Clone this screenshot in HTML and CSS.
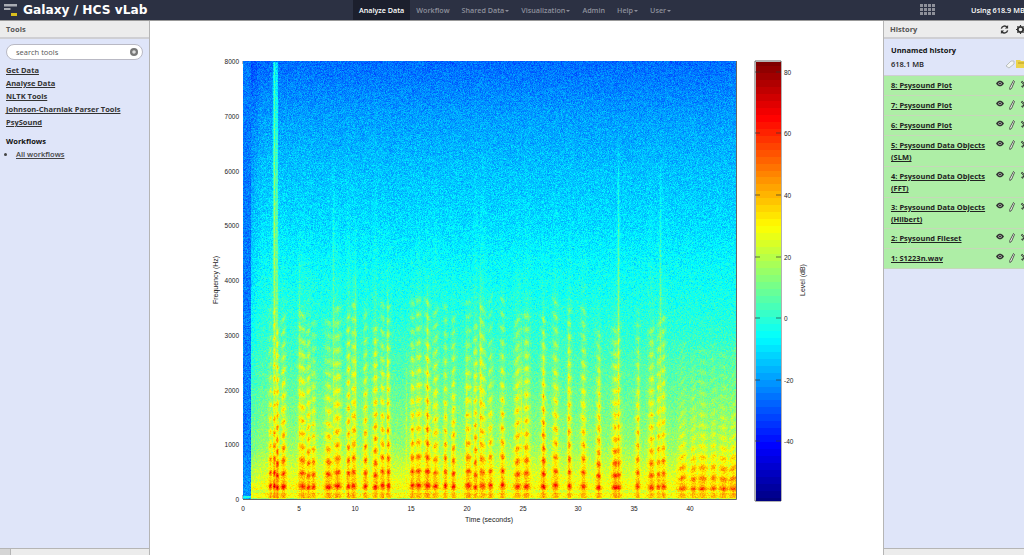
FILE: index.html
```html
<!DOCTYPE html>
<html lang="en">
<head>
    <meta charset="UTF-8">
    <meta name="viewport" content="width=device-width, initial-scale=1.0">
    <title>Galaxy / HCS vLab</title>
    <link rel="stylesheet" href="styles.css">
</head>
<body>

    <svg class="icon-defs" width="0" height="0">
        <symbol id="eye" viewBox="0 0 10 8">
            <path d="M0 4C2 1 3.500 .5 5 .5S8 1 10 4C8 7 6.500 7.500 5 7.500S2 7 0 4Z" fill="#333"/>
            <circle cx="5" cy="4" r="2" fill="#cfd8cf"/>
            <circle cx="5" cy="4" r="1.200" fill="#222"/>
        </symbol>
        <symbol id="pencil" viewBox="0 0 6 10">
            <path d="M4.500 .5L5.500 1.500L2.500 8.500L.8 9.500L.8 7.500Z" fill="#f4f8f0" stroke="#333" stroke-width=".8"/>
        </symbol>
        <symbol id="cross" viewBox="0 0 9 9">
            <path d="M1.500 1.500L7.500 7.500M7.500 1.500L1.500 7.500" stroke="#333" stroke-width="2" stroke-dasharray="1.200 .5"/>
        </symbol>
    </svg>

    <div id="masthead">
        <div class="brand">
            <svg class="brand-logo" width="13" height="12" viewBox="0 0 13 12">
                <rect x="0" y="0" width="13" height="2.500" fill="#a9acb3"/>
                <rect x="0" y="4" width="6.500" height="2" fill="#a9acb3"/>
                <rect x="7" y="9" width="6" height="3" fill="#d8bd1e"/>
            </svg>
            <span class="brand-title">Galaxy / HCS vLab</span>
        </div>
        <ul class="nav">
            <li class="nav-item active">Analyze Data</li>
            <li class="nav-item">Workflow</li>
            <li class="nav-item caret">Shared Data</li>
            <li class="nav-item caret">Visualization</li>
            <li class="nav-item">Admin</li>
            <li class="nav-item caret">Help</li>
            <li class="nav-item caret">User</li>
        </ul>
        <div class="apps-grid">
            <i></i><i></i><i></i><i></i><i></i><i></i><i></i><i></i><i></i><i></i><i></i><i></i>
        </div>
        <div class="quota">Using 618.9 MB</div>
    </div>

    <div id="columns">
        <div id="left" class="panel">
            <div class="panel-header">Tools</div>
            <div class="panel-body tools">
                <div class="search">
                    <span>search tools</span>
                    <svg class="search-clear" width="8" height="8" viewBox="0 0 8 8">
                        <circle cx="4" cy="4" r="4" fill="#777"/>
                        <circle cx="4" cy="4" r="1.800" fill="#ddd"/>
                    </svg>
                </div>
                <a class="tool-link">Get Data</a>
                <a class="tool-link">Analyse Data</a>
                <a class="tool-link">NLTK Tools</a>
                <a class="tool-link">Johnson-Charniak Parser Tools</a>
                <a class="tool-link">PsySound</a>
                <div class="workflows-title">Workflows</div>
                <ul class="workflows">
                    <li><a>All workflows</a></li>
                </ul>
            </div>
            <div class="panel-footer"><span class="grip"></span></div>
        </div>

        <div id="center">
            <div class="figure">
                <svg class="axes" width="620" height="480" viewBox="200 50 620 480">
                    <g class="tick-marks">
                        <path d="M243 499V495M299 499V495M355 499V495M411 499V495M467 499V495M523 499V495M578 499V495M634 499V495M690 499V495"/>
                        <path d="M243 61V64M299 61V64M355 61V64M411 61V64M467 61V64M523 61V64M578 61V64M634 61V64M690 61V64"/>
                        <path d="M243 499H247M243 444H247M243 390H247M243 335H247M243 280H247M243 225H247M243 171H247M243 116H247"/>
                        <path d="M736 444H731M736 390H731M736 335H731M736 280H731M736 225H731M736 171H731M736 116H731"/>
                    </g>
                    <path class="frame" d="M243 499.500H736.500V61"/>
                    <path class="frame" d="M755 61H781V501H755Z"/>
                    <g class="tick-labels end">
                        <text x="239" y="64">8000</text>
                        <text x="239" y="119">7000</text>
                        <text x="239" y="174">6000</text>
                        <text x="239" y="228">5000</text>
                        <text x="239" y="283">4000</text>
                        <text x="239" y="338">3000</text>
                        <text x="239" y="393">2000</text>
                        <text x="239" y="447">1000</text>
                        <text x="239" y="502">0</text>
                    </g>
                    <g class="tick-labels middle">
                        <text x="243" y="511">0</text>
                        <text x="299" y="511">5</text>
                        <text x="355" y="511">10</text>
                        <text x="411" y="511">15</text>
                        <text x="467" y="511">20</text>
                        <text x="523" y="511">25</text>
                        <text x="578" y="511">30</text>
                        <text x="634" y="511">35</text>
                        <text x="690" y="511">40</text>
                    </g>
                    <g class="tick-labels">
                        <text x="784" y="75">80</text>
                        <text x="784" y="136">60</text>
                        <text x="784" y="198">40</text>
                        <text x="784" y="260">20</text>
                        <text x="784" y="321">0</text>
                        <text x="784" y="383">-20</text>
                        <text x="784" y="444">-40</text>
                    </g>
                    <g class="axis-titles">
                        <text x="489" y="522">Time (seconds)</text>
                        <text transform="translate(218 280) rotate(-90)">Frequency (Hz)</text>
                        <text transform="translate(805 280) rotate(-90)">Level (dB)</text>
                    </g>
                </svg>
                <canvas id="spectrogram" class="spectrogram" width="493" height="438"></canvas>
                <canvas id="colorbar" class="colorbar" width="25" height="439"></canvas>
                <svg class="colorbar-ticks" width="26" height="440" viewBox="755 61 26 440">
                    <path d="M755 72H760M755 133H760M755 195H760M755 257H760M755 318H760M755 380H760M755 441H760"/>
                    <path d="M781 72H776M781 133H776M781 195H776M781 257H776M781 318H776M781 380H776M781 441H776"/>
                </svg>
            </div>
        </div>

        <div id="right" class="panel">
            <div class="panel-header history-header">
                <span>History</span>
                <span class="header-icons">
                    <svg width="9" height="9" viewBox="0 0 10 10"><path d="M1.500 4A3.700 3.700 0 0 1 8 2.500M8.500 6A3.700 3.700 0 0 1 2 7.500" fill="none" stroke="#333" stroke-width="1.500"/><path d="M9 0V4H5.500ZM1 10V6H4.500Z" fill="#333"/></svg>
                    <svg width="9" height="9" viewBox="0 0 10 10"><circle cx="5" cy="5" r="3" fill="none" stroke="#333" stroke-width="2"/><path d="M5 0V10M0 5H10M1.500 1.500L8.500 8.500M8.500 1.500L1.500 8.500" stroke="#333" stroke-width="1.300" stroke-dasharray="1.800 6.500 1.800"/></svg>
                </span>
            </div>
            <div class="panel-body history">
                <div class="history-info">
                    <div class="history-name">Unnamed history</div>
                    <div class="history-size">
                        <span>618.1 MB</span>
                        <span class="history-icons">
                            <svg width="10" height="9" viewBox="0 0 10 9"><path d="M1 6L6 1H9V4L4 8Z" fill="#f3f5f4" stroke="#aeb4b0" stroke-width=".8"/></svg>
                            <svg width="10" height="8" viewBox="0 0 10 8"><path d="M0 0H4L5 1H10V8H0Z" fill="#ecd34a"/><path d="M2 3H8" stroke="#b99b1e"/></svg>
                        </span>
                    </div>
                </div>
                <div class="dataset"><a>8: Psysound Plot</a><span class="dataset-icons"><svg width="8" height="7"><use href="#eye"/></svg><svg width="6" height="10"><use href="#pencil"/></svg><svg width="9" height="9"><use href="#cross"/></svg></span></div>
                <div class="dataset"><a>7: Psysound Plot</a><span class="dataset-icons"><svg width="8" height="7"><use href="#eye"/></svg><svg width="6" height="10"><use href="#pencil"/></svg><svg width="9" height="9"><use href="#cross"/></svg></span></div>
                <div class="dataset"><a>6: Psysound Plot</a><span class="dataset-icons"><svg width="8" height="7"><use href="#eye"/></svg><svg width="6" height="10"><use href="#pencil"/></svg><svg width="9" height="9"><use href="#cross"/></svg></span></div>
                <div class="dataset"><a>5: Psysound Data Objects (SLM)</a><span class="dataset-icons"><svg width="8" height="7"><use href="#eye"/></svg><svg width="6" height="10"><use href="#pencil"/></svg><svg width="9" height="9"><use href="#cross"/></svg></span></div>
                <div class="dataset"><a>4: Psysound Data Objects (FFT)</a><span class="dataset-icons"><svg width="8" height="7"><use href="#eye"/></svg><svg width="6" height="10"><use href="#pencil"/></svg><svg width="9" height="9"><use href="#cross"/></svg></span></div>
                <div class="dataset"><a>3: Psysound Data Objects (Hilbert)</a><span class="dataset-icons"><svg width="8" height="7"><use href="#eye"/></svg><svg width="6" height="10"><use href="#pencil"/></svg><svg width="9" height="9"><use href="#cross"/></svg></span></div>
                <div class="dataset"><a>2: Psysound Fileset</a><span class="dataset-icons"><svg width="8" height="7"><use href="#eye"/></svg><svg width="6" height="10"><use href="#pencil"/></svg><svg width="9" height="9"><use href="#cross"/></svg></span></div>
                <div class="dataset"><a>1: S1223n.wav</a><span class="dataset-icons"><svg width="8" height="7"><use href="#eye"/></svg><svg width="6" height="10"><use href="#pencil"/></svg><svg width="9" height="9"><use href="#cross"/></svg></span></div>
            </div>
            <div class="panel-footer"></div>
        </div>
    </div>

    <script src="script.js"></script>

</body>
</html>
```

FILE: styles.css
```css
* {
    box-sizing: border-box;
}

html, body {
    height: 100%;
}

body {
    font-family: 'Open Sans', sans-serif;
    font-size: 7.500px;
    color: #222;
    margin: 0;
    display: flex;
    flex-direction: column;
    overflow: hidden;
    background-color: #fff;
}

.icon-defs {
    position: absolute;
}

#masthead {
    height: 21px;
    flex: none;
    display: flex;
    align-items: stretch;
    background-color: #2c3143;
    border-bottom: 1px solid #999;
    color: #fff;
}

.brand {
    width: 353px;
    flex: none;
    display: flex;
    align-items: center;
    padding-left: 4px;
}

.brand-logo {
    margin-right: 6px;
}

.brand-title {
    font-family: 'DejaVu Sans', sans-serif;
    font-size: 12.200px;
    font-weight: bold;
}

.nav {
    list-style: none;
    margin: 0;
    padding: 0;
    display: flex;
    width: 567px;
    flex: none;
    font-size: 7.200px;
}

.nav-item {
    padding: 0 6px;
    line-height: 20px;
    font-weight: 600;
    color: #8d909c;
}

.nav-item.active {
    background-color: #1c1f2d;
    color: #fff;
}

.nav-item.caret::after {
    content: "";
    display: inline-block;
    margin-left: 1px;
    vertical-align: middle;
    border-top: 2px solid #8d909c;
    border-left: 2px solid transparent;
    border-right: 2px solid transparent;
}

.apps-grid {
    width: 15px;
    height: 12px;
    margin-top: 4px;
    flex: none;
    display: grid;
    grid-template-columns: repeat(4, 3px);
    grid-template-rows: repeat(3, 3px);
    gap: 1px;
}

.apps-grid i {
    background-color: #8f919a;
}

.quota {
    margin-left: 36px;
    line-height: 20px;
    font-weight: 600;
    font-size: 7.300px;
    white-space: nowrap;
}

#columns {
    flex: 1;
    display: flex;
    min-height: 0;
}

.panel {
    flex: none;
    display: flex;
    flex-direction: column;
    overflow: hidden;
    background-color: #dfe5f9;
}

#left {
    width: 150px;
    border-right: 1px solid #b5b5b5;
}

#right {
    width: 141px;
    border-left: 1px solid #b5b5b5;
}

.panel-header {
    height: 18px;
    flex: none;
    padding: 0 6px;
    display: flex;
    align-items: center;
    justify-content: space-between;
    background-color: #ececec;
    border-bottom: 2px solid #cfcfd3;
    font-weight: 700;
    color: #555;
}

.panel-body {
    flex: 1;
    min-height: 0;
}

.panel-footer {
    height: 7px;
    flex: none;
    background-color: #ececec;
    border-top: 1px solid #b5b5b5;
}

.grip {
    display: block;
    width: 11px;
    height: 6px;
    background-color: #d5d5d5;
    border-right: 1px solid #b5b5b5;
}

.tools {
    padding: 5px 6px;
}

.search {
    height: 16px;
    margin-bottom: 3.500px;
    padding: 0 4px 0 9px;
    display: flex;
    align-items: center;
    justify-content: space-between;
    background-color: #fff;
    border: 1px solid #b9b9c4;
    border-radius: 8px;
    color: #555;
}

.tool-link {
    display: block;
    height: 13.200px;
    line-height: 13.200px;
    font-weight: 700;
    color: #333;
    text-decoration: underline;
    white-space: nowrap;
}

.workflows-title {
    margin-top: 6px;
    line-height: 13px;
    font-weight: 700;
    color: #111;
}

.workflows {
    margin: 0;
    padding-left: 10px;
    line-height: 13px;
    font-weight: 600;
    color: #444;
    text-decoration: underline;
}

#center {
    flex: 1;
    min-width: 0;
    padding: 29px 0 0 50px;
}

.figure {
    position: relative;
    width: 620px;
    height: 480px;
}

.axes {
    display: block;
}

.spectrogram {
    position: absolute;
    left: 43px;
    top: 11px;
    filter: blur(.45px);
}

.colorbar {
    position: absolute;
    left: 555.500px;
    top: 11.500px;
}

.colorbar-ticks {
    position: absolute;
    left: 555px;
    top: 11px;
    stroke: #333;
    stroke-width: .7;
}

.frame {
    fill: none;
    stroke: #666;
    stroke-width: 1;
}

.tick-marks {
    stroke: #333;
    fill: none;
}

.tick-marks path {
    stroke-width: .7;
}

.tick-labels {
    font-family: 'Liberation Sans', sans-serif;
    font-size: 6.500px;
    fill: #222;
}

.tick-labels.end {
    text-anchor: end;
}

.tick-labels.middle {
    text-anchor: middle;
}

.axis-titles {
    font-family: 'Liberation Sans', sans-serif;
    font-size: 7px;
    fill: #222;
    text-anchor: middle;
}

.history-header {
    padding-right: 0;
}

.header-icons {
    display: flex;
    gap: 7px;
    margin-right: -1px;
}

.history {
    width: 150px;
}

.history-info {
    height: 37px;
    padding: 5px 8px 0 7px;
    border-bottom: 1px solid #cfcfd3;
}

.history-name {
    line-height: 12px;
    font-weight: 700;
    color: #111;
}

.history-size {
    margin-top: 2px;
    line-height: 12px;
    font-weight: 600;
    display: flex;
    justify-content: space-between;
    align-items: center;
}

.history-icons {
    display: flex;
    gap: 1px;
}

.dataset {
    min-height: 20px;
    padding: 3px 5px 3px 7px;
    display: flex;
    justify-content: space-between;
    line-height: 12px;
    background-color: #aeeea6;
    border-bottom: 1px solid #c5d8b8;
}

.dataset a {
    width: 98px;
    font-weight: 700;
    color: #222;
    text-decoration: underline;
}

.dataset-icons {
    flex: none;
    display: flex;
    align-items: flex-start;
    gap: 5px;
    padding-top: 1px;
}
```

FILE: script.js
```js
// small seeded generator so the picture is the same on every load
let seed = 12345;
function rand() {
    seed = (seed * 1664525 + 1013904223) >>> 0;
    return seed / 4294967296;
}

function jet(v) {
    const clamp = n => Math.max(0, Math.min(1, n));
    const r = clamp(1.5 - Math.abs(4 * v - 3));
    const g = clamp(1.5 - Math.abs(4 * v - 2));
    const b = clamp(1.5 - Math.abs(4 * v - 1));
    return [r * 255, g * 255, b * 255];
}

const minLevel = -59;
const maxLevel = 84;

function levelColor(level) {
    // the plot only has 64 colour steps
    const v = Math.max(0, Math.min(1, (level - minLevel) / (maxLevel - minLevel)));
    return jet(Math.round(v * 63) / 63);
}

const baseTable = [[0, 30], [200, 30], [500, 24], [1000, 15], [2000, 8], [3000, 1], [4000, -4], [5000, -10], [6000, -14], [7000, -19], [8000, -26]];

function baseLevel(f) {
    for (let i = 1; i < baseTable.length; i++) {
        if (f <= baseTable[i][0]) {
            const a = baseTable[i - 1];
            const b = baseTable[i];
            return a[1] + (b[1] - a[1]) * (f - a[0]) / (b[0] - a[0]);
        }
    }
    return -26;
}

// pixel column of each syllable, counted from the plot's left edge
const loud = [27, 31, 34, 40, 59, 65, 70, 85, 94, 105, 110, 122, 132, 139, 145, 169, 175, 184, 192, 202, 210, 225, 232, 239, 247, 259, 274, 283, 300, 312, 326, 340, 355, 372, 375, 394, 408, 415, 420];
const soft = [439, 450, 459, 470, 480, 490];

const syllables = [];
loud.forEach(x => syllables.push({ x: x, sigma: 1.8 + rand() * 2, top: 1700 + rand() * 1800, gain: .85 + rand() * .25, f0: 215 + rand() * 50, slope: -2 + rand() * 4 }));
soft.forEach(x => syllables.push({ x: x, sigma: 3 + rand() * 2, top: 900 + rand() * 500, gain: .8, f0: 170 + rand() * 40, slope: -3 + rand() * 6 }));

// spots where noise reaches far up the plot: column, top frequency, strength, width
const streaks = [
    [31, 8000, 27, 1.3], [33.5, 8000, 30, .6], [90, 6500, 10, 1], [112, 5000, 11, 1], [163, 2800, 8, 1], [184, 4400, 11, 1],
    [223, 3500, 9, 1], [278, 3600, 9, 1], [325, 3800, 8, 1], [375, 7000, 16, 1], [417, 6400, 12, 1], [56, 5000, 9, 1],
    [144, 4400, 9, 1], [237, 4400, 12, 1], [300, 3800, 9, 1], [356, 3400, 8, 1], [395, 3500, 8, 1]
];

function drawSpectrogram() {
    const canvas = document.getElementById('spectrogram');
    const ctx = canvas.getContext('2d');
    const w = canvas.width;
    const h = canvas.height;
    const image = ctx.createImageData(w, h);

    for (let x = 0; x < w; x++) {
        // strongest syllable wins for this column
        let voice = 0;
        let current = syllables[0];
        let dx = 0;
        for (const s of syllables) {
            const d = (x - s.x) / s.sigma;
            const v = Math.exp(-d * d) * s.gain;
            if (v > voice) {
                voice = v;
                current = s;
                dx = x - s.x;
            }
        }
        const f0 = current.f0 + current.slope * dx;

        for (let y = 0; y < h; y++) {
            const f = (h - y) / h * 8000;
            let level = baseLevel(f);

            // silent start of the recording
            if (x < 8) {
                level = -24 + Math.max(0, 1000 - f) * .004 + (f < 60 ? 18 : 0);
            } else if (x < 18) {
                level -= 5 * (1 - (x - 8) / 10) * (f > 300 ? 1 : .3);
            }

            level += voice * 14 * Math.exp(-Math.pow(f / current.top, 1.5));
            for (let k = 1; k <= 14; k++) {
                const d = (f - f0 * k) / (k < 3 ? 42 : 55);
                if (Math.abs(d) < 3) {
                    const gain = (k === 1 ? 24 : k === 2 ? 24 : 24) * Math.exp(-f / (current.top * 2));
                    level += voice * gain * Math.exp(-d * d);
                }
            }

            for (const s of streaks) {
                const d = (x - s[0]) / s[3];
                if (Math.abs(d) < 3 && f < s[1]) {
                    const shape = s[1] < 8000 ? Math.sin(Math.min(1, f / s[1]) * 3.14) : Math.max(.2, Math.min(1, (f - 1000) / 4000));
                    level += s[2] * Math.exp(-d * d) * shape;
                }
            }

            // bands along the axis
            if (f < 36) {
                level -= 14;
            } else if (f > 110 && f < 165 && x > 8) {
                level -= 6;
            }

            level += (rand() + rand() - 1) * 8;

            const c = levelColor(level);
            const i = (y * w + x) * 4;
            image.data[i] = c[0];
            image.data[i + 1] = c[1];
            image.data[i + 2] = c[2];
            image.data[i + 3] = 255;
        }
    }
    ctx.putImageData(image, 0, 0);
}

function drawColorbar() {
    const canvas = document.getElementById('colorbar');
    const ctx = canvas.getContext('2d');
    for (let y = 0; y < canvas.height; y++) {
        const c = levelColor(maxLevel - (maxLevel - minLevel) * y / canvas.height);
        ctx.fillStyle = `rgb(${c[0]}, ${c[1]}, ${c[2]})`;
        ctx.fillRect(0, y, canvas.width, 1);
    }
}

drawSpectrogram();
drawColorbar();
```
